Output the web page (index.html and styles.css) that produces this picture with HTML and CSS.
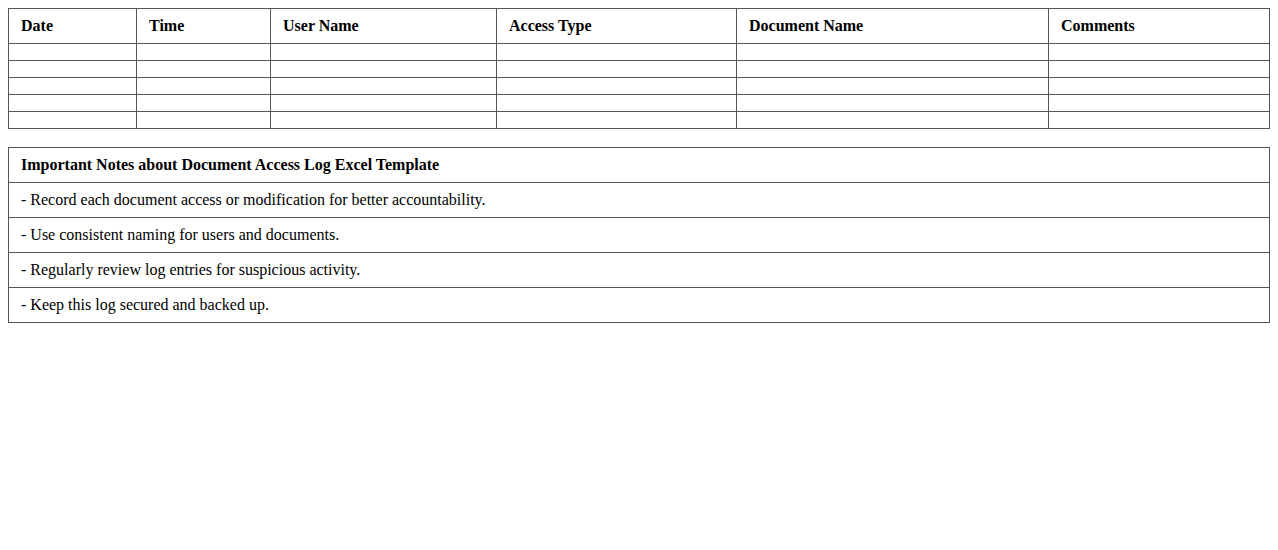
FILE: index.html
```html
<!DOCTYPE html>
<html>
<head>
<meta charset="utf-8">
<link rel="stylesheet" href="styles.css">
</head>
<body>
<table class="log">
  <thead>
    <tr>
      <th class="c-date">Date</th>
      <th class="c-time">Time</th>
      <th class="c-user">User Name</th>
      <th class="c-type">Access Type</th>
      <th class="c-doc">Document Name</th>
      <th class="c-comm">Comments</th>
    </tr>
  </thead>
  <tbody>
    <tr><td></td><td></td><td></td><td></td><td></td><td></td></tr>
    <tr><td></td><td></td><td></td><td></td><td></td><td></td></tr>
    <tr><td></td><td></td><td></td><td></td><td></td><td></td></tr>
    <tr><td></td><td></td><td></td><td></td><td></td><td></td></tr>
    <tr><td></td><td></td><td></td><td></td><td></td><td></td></tr>
  </tbody>
</table>

<table class="notes">
  <thead>
    <tr><th>Important Notes about Document Access Log Excel Template</th></tr>
  </thead>
  <tbody>
    <tr><td>- Record each document access or modification for better accountability.</td></tr>
    <tr><td>- Use consistent naming for users and documents.</td></tr>
    <tr><td>- Regularly review log entries for suspicious activity.</td></tr>
    <tr><td>- Keep this log secured and backed up.</td></tr>
  </tbody>
</table>
</body>
</html>
```
FILE: styles.css
```css
body {
  margin: 8px;
  font-family: "Liberation Serif", "Times New Roman", serif;
  font-size: 16px;
  color: #000;
  background: #fff;
}
table {
  width: 100%;
  border-collapse: collapse;
  table-layout: fixed;
}
th, td {
  border: 1px solid #555;
  padding: 8px 12px;
  text-align: left;
  line-height: 18px;
  box-sizing: border-box;
}
th {
  font-weight: bold;
}
.log td {
  line-height: 0;
}
.c-date { width: 128px; }
.c-time { width: 134px; }
.c-user { width: 226px; }
.c-type { width: 240px; }
.c-doc { width: 312px; }
.notes {
  margin-top: 18px;
}
```
